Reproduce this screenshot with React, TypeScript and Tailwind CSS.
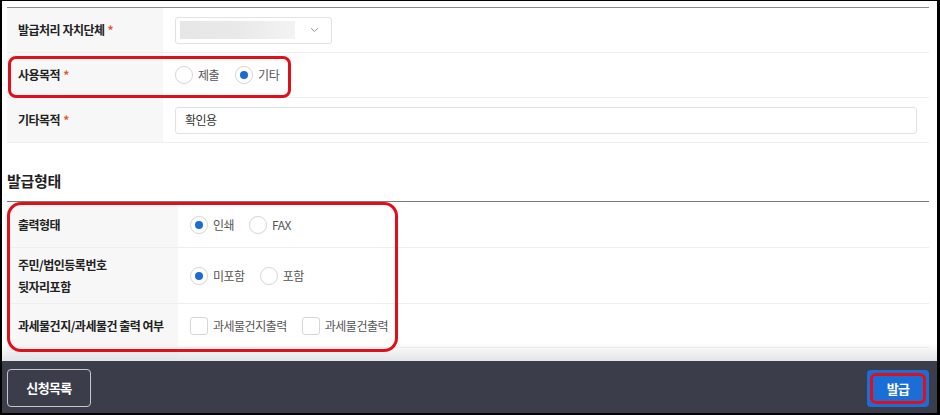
import React from "react";

const font = "font-['Noto_Sans_CJK_KR','Noto_Sans',sans-serif]";

function Required() {
  return <span className="ml-[3px] text-[#e4572e]">*</span>;
}

function Radio({ label, checked }: { label: string; checked?: boolean }) {
  return (
    <label className="flex items-center gap-[5px]">
      <span className="flex h-[18px] w-[18px] items-center justify-center rounded-full border border-[#d9d9d9] bg-white shadow-[0_0_1px_rgba(0,0,0,0.08)]">
        {checked && <span className="h-[8px] w-[8px] rounded-full bg-[#1a6bd4]" />}
      </span>
      <span className="text-[12px] tracking-[-0.5px] text-[#555]">{label}</span>
    </label>
  );
}

function Checkbox({ label }: { label: string }) {
  return (
    <label className="flex items-center gap-[5px]">
      <span className="h-[18px] w-[18px] rounded-[3px] border border-[#d6d6d6] bg-white" />
      <span className="text-[12px] tracking-[-0.5px] text-[#555]">{label}</span>
    </label>
  );
}

function Row({
  label,
  labelWidth,
  height,
  children,
  required,
}: {
  label: React.ReactNode;
  labelWidth: string;
  height: string;
  children?: React.ReactNode;
  required?: boolean;
}) {
  return (
    <div className={`flex border-b border-[#eeeeee] ${height}`}>
      <div
        className={`flex shrink-0 items-center bg-[#f7f7f7] pl-[11px] text-[12px] font-bold leading-[22px] tracking-[-0.5px] text-[#222] ${labelWidth}`}
      >
        <div>
          {label}
          {required && <Required />}
        </div>
      </div>
      <div className="flex flex-1 items-center px-[12px]">{children}</div>
    </div>
  );
}

export default function App() {
  return (
    <div
      className={`flex h-[415px] w-[940px] flex-col overflow-hidden border-t border-b-2 border-l-2 border-r-[3px] border-black bg-white ${font}`}
    >
      <div className="relative flex-1 overflow-hidden pl-[5px] pr-[8px] pt-[6px]">
        {/* 신청 정보 */}
        <div className="border-t border-[#8a8a8a]">
          <Row label="발급처리 자치단체" labelWidth="w-[156px]" height="h-[45px]" required>
            <div className="flex h-[27px] w-[157px] items-center justify-between rounded-[3px] border border-[#e2e2e2] pl-[4px] pr-[12px]">
              <div className="h-[18px] w-[115px] bg-linear-to-r from-[#e6e6e6] via-[#e9e9e9] to-[#f3f3f3]" />
              <svg width="9" height="6" viewBox="0 0 9 6" fill="none">
                <path d="M1 1.2l3.5 3.3L8 1.2" stroke="#999" strokeWidth="1" />
              </svg>
            </div>
          </Row>
          <Row label="사용목적" labelWidth="w-[156px]" height="h-[45px]" required>
            <div className="flex items-center gap-[16px]">
              <Radio label="제출" />
              <Radio label="기타" checked />
            </div>
          </Row>
          <Row label="기타목적" labelWidth="w-[156px]" height="h-[45px]" required>
            <div className="flex h-[27px] w-full items-center rounded-[3px] border border-[#e2e2e2] px-[9px] text-[12px] tracking-[-0.5px] text-[#333]">
              확인용
            </div>
          </Row>
        </div>

        <h3 className="pb-[10px] pt-[28px] text-[15px] font-semibold leading-[20px] tracking-[-0.3px] text-[#222]">
          발급형태
        </h3>

        {/* 발급형태 */}
        <div className="border-t border-[#7a7a7a]">
          <Row label="출력형태" labelWidth="w-[171px]" height="h-[46px]">
            <div className="flex items-center gap-[15px]">
              <Radio label="인쇄" checked />
              <Radio label="FAX" />
            </div>
          </Row>
          <Row
            label={
              <>
                주민/법인등록번호
                <br />
                뒷자리포함
              </>
            }
            labelWidth="w-[171px]"
            height="h-[56px]"
          >
            <div className="flex items-center gap-[15px]">
              <Radio label="미포함" checked />
              <Radio label="포함" />
            </div>
          </Row>
          <Row label="과세물건지/과세물건 출력 여부" labelWidth="w-[171px]" height="h-[44px]">
            <div className="flex items-center gap-[15px]">
              <Checkbox label="과세물건지출력" />
              <Checkbox label="과세물건출력" />
            </div>
          </Row>
          <Row label="" labelWidth="w-[171px]" height="h-[44px]" />
        </div>

        {/* 스크롤 그림자 */}
        <div className="pointer-events-none absolute bottom-0 left-0 right-0 h-[18px] bg-linear-to-b from-transparent to-[#e3e4e7]" />

        {/* 강조 표시 */}
        <div className="pointer-events-none absolute left-[6px] top-[55px] h-[42px] w-[283px] rounded-[8px] border-[3px] border-[#e0101a]" />
        <div className="pointer-events-none absolute left-[5px] top-[201px] h-[150px] w-[391px] rounded-[14px] border-[3px] border-[#e0101a]" />
      </div>

      <footer className="flex h-[52px] items-start justify-between bg-[#3b3d4a] pl-[5px] pr-[8px] pt-[8px]">
        <button className="h-[38px] w-[84px] rounded-[4px] border border-[#c6c7cc] text-[13px] font-semibold tracking-[-0.6px] text-white">
          신청목록
        </button>
        <button className="relative mt-[1px] h-[37px] w-[62px] rounded-[4px] bg-[#1b6ed6] text-[13px] font-bold tracking-[-0.6px] text-white">
          발급
          <span className="pointer-events-none absolute inset-[3px] rounded-[6px] border-[3px] border-[#e0101a]" />
        </button>
      </footer>
    </div>
  );
}
